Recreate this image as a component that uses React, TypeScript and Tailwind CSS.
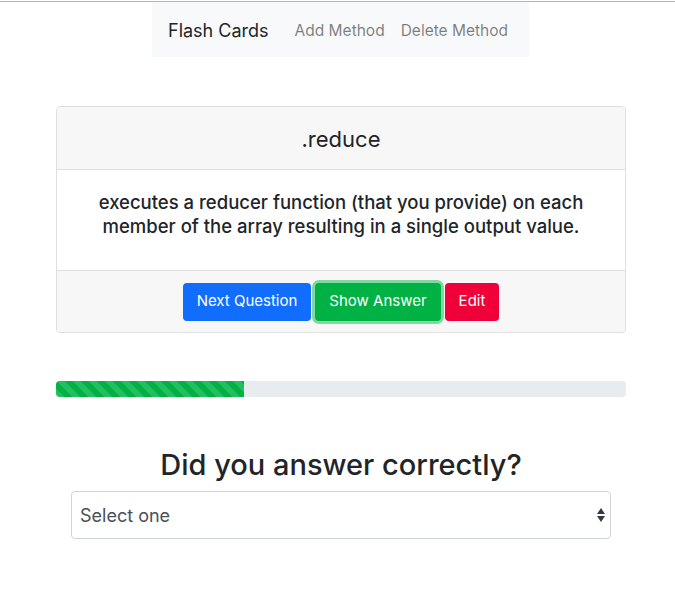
import { useState } from "react";

const stripes =
  "bg-[linear-gradient(45deg,rgba(255,255,255,0.15)_25%,transparent_25%,transparent_50%,rgba(255,255,255,0.15)_50%,rgba(255,255,255,0.15)_75%,transparent_75%,transparent)] bg-size-[16px_16px]";

const App = () => {
  const [answer, setAnswer] = useState("");
  const progress = 33;

  return (
    <div className="min-h-screen bg-white text-[#212529] font-['Inter','Liberation_Sans',sans-serif]">
      <div className="pt-px">
        <div className="h-px bg-[#b4b4b4]" />
      </div>

      <nav className="ml-[152px] w-[377px] h-[55px] pt-0.5 bg-[#f8f9fa] flex items-center px-4 whitespace-nowrap">
        <a href="#" className="text-[18px] text-[#212529] mr-[18px]">
          Flash Cards
        </a>
        <a href="#" className="px-2 text-[15.5px] text-black/50">
          Add Method
        </a>
        <a href="#" className="px-2 text-[15.5px] text-black/50">
          Delete Method
        </a>
      </nav>

      <div className="ml-[56px] w-[570px]">
        <div className="mt-[49px] border border-[#dfdfdf] rounded-[4px] overflow-hidden">
          <div className="h-[63px] pt-0.5 bg-[#f7f7f7] border-b border-[#dfdfdf] flex items-center justify-center text-[22px]">
            .reduce
          </div>
          <div className="h-[100px] pt-5 px-10 text-center text-[18.5px] leading-[24px] font-medium">
            executes a reducer function (that you provide) on each member of the array resulting in a single output
            value.
          </div>
          <div className="h-[62px] bg-[#f7f7f7] border-t border-[#dfdfdf] flex items-center justify-center gap-1 text-[15px] text-white">
            <button className="h-[38px] px-[14px] rounded-[4px] bg-[#116dfd]">Next Question</button>
            <button className="h-[38px] px-[14px] rounded-[4px] bg-[#00b144] ring-[3px] ring-[#7fd9a1]">
              Show Answer
            </button>
            <button className="h-[38px] px-[14px] rounded-[4px] bg-[#ef0038]">Edit</button>
          </div>
        </div>

        <div className="mt-[48px] h-4 rounded-[4px] bg-[#e9ecef] overflow-hidden flex">
          <div className={`bg-[#00b144] ${stripes}`} style={{ width: `${progress}%` }} />
        </div>

        <h2 className="mt-[48px] text-center text-[29px] leading-[40px] font-medium">Did you answer correctly?</h2>

        <div className="mx-[15px] mt-[6px] relative">
          <select
            value={answer}
            onChange={(e) => setAnswer(e.target.value)}
            className="w-full h-[48px] appearance-none border border-[#ced4da] rounded-[4px] bg-white pl-2 text-[18px] text-[#495057]"
          >
            <option value="">Select one</option>
            <option value="yes">Yes</option>
            <option value="no">No</option>
          </select>
          <svg
            className="absolute right-[5px] top-[14px] pointer-events-none"
            width="10"
            height="20"
            viewBox="0 0 10 20"
          >
            <path d="M1 9 L5 3 L9 9 Z" fill="#343a40" />
            <path d="M1 11 L5 17 L9 11 Z" fill="#343a40" />
          </svg>
        </div>
      </div>
    </div>
  );
};

export default App;
